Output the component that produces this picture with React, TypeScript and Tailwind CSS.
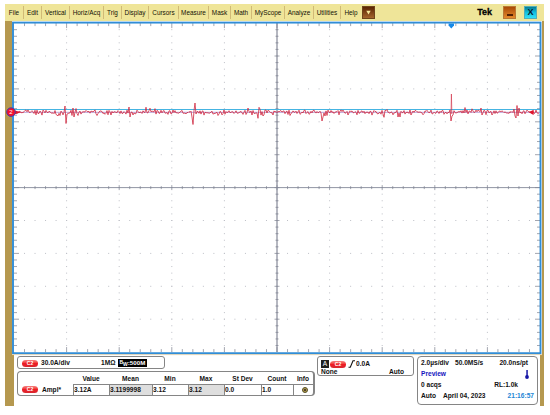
import React from 'react';

const menus = [
  { label: 'File', width: 'w-[19px]' },
  { label: 'Edit', width: 'w-[18px]' },
  { label: 'Vertical', width: 'w-[28px]' },
  { label: 'Horiz/Acq', width: 'w-[34px]' },
  { label: 'Trig', width: 'w-[18px]' },
  { label: 'Display', width: 'w-[27px]' },
  { label: 'Cursors', width: 'w-[30px]' },
  { label: 'Measure', width: 'w-[30px]' },
  { label: 'Mask', width: 'w-[22px]' },
  { label: 'Math', width: 'w-[21px]' },
  { label: 'MyScope', width: 'w-[33px]' },
  { label: 'Analyze', width: 'w-[29px]' },
  { label: 'Utilities', width: 'w-[27px]' },
];

const measurements = [
  { name: 'Value', value: '3.12A', width: 'w-[36px]', shade: 'bg-white' },
  { name: 'Mean', value: '3.1199998', width: 'w-[43px]', shade: 'bg-[#dedede]' },
  { name: 'Min', value: '3.12', width: 'w-[36px]', shade: 'bg-white' },
  { name: 'Max', value: '3.12', width: 'w-[36px]', shade: 'bg-[#dedede]' },
  { name: 'St Dev', value: '0.0', width: 'w-[37px]', shade: 'bg-white' },
  { name: 'Count', value: '1.0', width: 'w-[32px]', shade: 'bg-white' },
];

// graticule: 10 x 10 divisions, 5 minor ticks each
const LEFT = 14;
const TOP = 23.1;
const DX = 52.6;
const DY = 32.9;
const RIGHT = LEFT + DX * 10;
const BOTTOM = TOP + DY * 10;
const MID_X = LEFT + DX * 5;
const MID_Y = TOP + DY * 5;
const BASE = 112.3;

const steps = Array.from({ length: 49 }, (_, i) => i + 1);
const divs = [1, 2, 3, 4, 5, 6, 7, 8, 9];

const spikes: Array<[number, number]> = [
  [56, 114.5], [58, 116], [60, 115.5], [65, 106], [66, 123.5], [67, 114],
  [72, 115.5], [73, 108], [74, 117], [76, 108.5], [78, 115.5], [97, 115.5],
  [129, 107], [130, 117], [133, 115], [146, 107.2], [150, 108.2], [155, 108.6],
  [192, 117], [193, 124.5], [195, 103], [196, 114], [218, 115.5],
  [248, 108], [257, 113], [258, 118.3], [259, 107.3], [260, 109], [263, 116],
  [290, 115.5], [321, 113], [322, 121], [323, 117], [325, 116], [327, 115.5],
  [383, 114], [384, 117.3], [387, 109.5], [398, 117], [399, 113], [400, 117],
  [450, 110], [451, 121], [452, 116], [465, 107.5], [472, 108.8], [481, 108],
  [482, 115], [514, 109], [515, 116], [516, 118], [517, 105.5], [518, 116], [519, 108],
];

function buildTrace() {
  const peaks = new Map(spikes);
  let seed = 29;
  let path = `M${LEFT} ${BASE}`;
  for (let x = LEFT + 1; x < RIGHT; x += 1) {
    seed = (seed * 16807) % 2147483647;
    const noise = (seed / 2147483647 - 0.5) * 3.8 + (x % 3 === 0 ? 1 : -0.5);
    const y = peaks.get(x) ?? BASE + noise;
    path += `L${x} ${y.toFixed(1)}`;
  }
  return path;
}

function Graticule() {
  return (
    <g>
      <g stroke="#bdbfc6" strokeWidth="1">
        {divs.map((d) => (
          <g key={d}>
            <line x1={LEFT + d * DX} x2={LEFT + d * DX} y1={TOP + DY / 5 - 0.5} y2={BOTTOM} strokeDasharray={`1 ${DY / 5 - 1}`} />
            <line y1={TOP + d * DY} y2={TOP + d * DY} x1={LEFT + DX / 5 - 0.5} x2={RIGHT} strokeDasharray={`1 ${DX / 5 - 1}`} />
          </g>
        ))}
      </g>
      <g stroke="#8b8f9c" strokeWidth="0.8">
        {steps.map((i) => {
          const x = LEFT + (i * DX) / 5;
          const y = TOP + (i * DY) / 5;
          const len = i % 5 === 0 ? 5 : 3;
          return (
            <g key={i}>
              <line x1={x} x2={x} y1={TOP} y2={TOP + len} />
              <line x1={x} x2={x} y1={BOTTOM - len} y2={BOTTOM} />
              <line x1={x} x2={x} y1={MID_Y - len / 2} y2={MID_Y + len / 2} />
              <line y1={y} y2={y} x1={LEFT} x2={LEFT + len} />
              <line y1={y} y2={y} x1={RIGHT - len} x2={RIGHT} />
              <line y1={y} y2={y} x1={MID_X - len / 2} x2={MID_X + len / 2} />
            </g>
          );
        })}
      </g>
      <line x1={MID_X} x2={MID_X} y1={TOP} y2={BOTTOM} stroke="#858998" strokeWidth="1.2" />
      <line x1={LEFT} x2={RIGHT} y1={MID_Y} y2={MID_Y} stroke="#858998" strokeWidth="0.9" />
    </g>
  );
}

function Display() {
  return (
    <svg viewBox="12 21 530 334" className="block h-[334px] w-[530px] overflow-visible bg-white">
      <Graticule />
      <line x1={LEFT} x2={RIGHT} y1="109.5" y2="109.5" stroke="#45b4e2" strokeWidth="1" />
      <line x1={LEFT} x2={RIGHT} y1={BASE} y2={BASE} stroke="#8a62b8" strokeWidth="0.6" />
      <path d={buildTrace()} fill="none" stroke="#d02840" strokeWidth="0.8" />
      <path d="M451 114L451.4 94L451.9 114" fill="none" stroke="#d02840" strokeWidth="0.6" />
      <rect x="13" y="22.6" width="527.5" height="330.6" fill="none" stroke="#318dd6" strokeWidth="1.9" />
      <line x1="12" x2="542" y1="354.6" y2="354.6" stroke="#dccba4" strokeWidth="0.8" />
      <path d="M448.6 23.5h5.4v2l-2.7 3l-2.7-3z" fill="#1689e8" />
      <path d="M528.8 112.3l4.8-2.6v5.2z" fill="#e0142c" />
      <path d="M15 110.4l6 1.9l-6 1.9z" fill="#e0142c" />
      <circle cx="11" cy="112.1" r="4.3" fill="#f5102c" stroke="#3540b5" strokeWidth="0.9" />
      <text x="11" y="114.3" textAnchor="middle" fill="#fff" className="text-[6px] font-normal">2</text>
    </svg>
  );
}

function ChannelBadge() {
  return (
    <span className="flex h-[7px] w-[16px] shrink-0 items-center justify-center rounded-full bg-linear-to-b from-[#f58080] via-[#ee1c24] to-[#d82830] text-[5px] leading-none text-white">
      C2
    </span>
  );
}

function MenuBar() {
  return (
    <div className="flex h-[17px] items-center bg-[#efe599] text-[6.4px] font-normal text-[#141204]">
      {menus.map((menu) => (
        <div key={menu.label} className={`${menu.width} flex h-[13px] shrink-0 items-center justify-center border-r border-[#d1ba76] whitespace-nowrap`}>
          {menu.label}
        </div>
      ))}
      <div className="w-[20px] shrink-0 text-center">Help</div>
      <button className="ml-px flex size-[13px] shrink-0 items-center justify-center border border-[#70451c] bg-linear-to-b from-[#5b2503] to-[#a5662d]">
        <svg viewBox="0 0 5 5" className="size-[5px]" fill="#f5e79c">
          <path d="M0.3 0.8h4.4L2.5 4.6z" />
        </svg>
      </button>
      <div className="flex-1" />
      <span className="mr-[11px] text-[9px] font-bold text-black [-webkit-text-stroke:0.3px_black]">Tek</span>
      <button className="mr-[8px] flex size-[13px] shrink-0 items-end justify-center border border-[#b97836] bg-linear-to-b from-[#a94a05] to-[#e58a2b] pb-[2px]">
        <span className="h-[2px] w-[6px] bg-[#542204]" />
      </button>
      <button className="mr-[7px] flex size-[13px] shrink-0 items-center justify-center border border-[#53aeb8] bg-linear-to-b from-[#087b91] via-[#12bfe0] to-[#30e0f8] text-[9px] leading-none font-bold text-[#04202c]">
        X
      </button>
    </div>
  );
}

function Readouts() {
  return (
    <div className="flex h-[51px] items-start border-x-2 border-[#b5984f] bg-white pt-px pl-[3px] text-[6.6px] leading-[8px] font-bold text-[#111111]">
      <div className="flex w-[300px] shrink-0 flex-col gap-[2px]">
        <div className="flex h-[13px] w-[148px] items-center rounded-[3px] border border-[#858585] pt-px pl-[4px]">
          <ChannelBadge />
          <span className="ml-[3px] w-[60px]">30.0A/div</span>
          <span className="mr-[3px]">1MΩ</span>
          <span className="flex h-[8px] w-[29px] items-center bg-black pl-px text-white">
            <span className="-mt-[3px] text-[5px]">B</span>
            <span className="mt-[2px] text-[5px] leading-none">W</span>
            <span className="text-[6.2px]">:500M</span>
          </span>
        </div>
        <div className="flex h-[25px] w-[298px] items-end rounded-[4px] border border-r-2 border-[#858585] pl-[4px]">
          <div className="flex h-[11px] w-[51px] shrink-0 items-center gap-[4px]">
            <ChannelBadge />
            <span>Ampl*</span>
          </div>
          {measurements.map((m) => (
            <div key={m.name} className={`${m.width} shrink-0`}>
              <div className="mb-px text-center">{m.name}</div>
              <div className={`${m.shade} h-[11px] border-t border-l border-[#858585] pt-px`}>{m.value}</div>
            </div>
          ))}
          <div className="flex-1">
            <div className="mb-px text-center">Info</div>
            <div className="flex h-[11px] items-center justify-center border-t border-l border-[#858585] pl-[3px]">
              <span className="flex size-[6px] items-center justify-center rounded-full border border-[#57502e] bg-[#b3a04a]">
                <span className="size-[2px] bg-[#504030]" />
              </span>
            </div>
          </div>
        </div>
      </div>
      <div className="h-[20px] w-[97px] shrink-0 rounded-[3px] border border-[#858585] px-[3px] pt-[3px]">
        <div className="flex h-[8px] items-center">
          <span className="mr-px flex size-[8px] items-center justify-center bg-[#202020] font-normal text-white">A</span>
          <ChannelBadge />
          <svg viewBox="0 0 8 8" className="ml-[2px] size-[8px]" fill="none" stroke="#111" strokeWidth="1.1">
            <path d="M0.5 7.3H2.3L5 0.8H7" />
          </svg>
          <span>0.0A</span>
        </div>
        <div className="flex justify-between pr-[6px]">
          <span>None</span>
          <span>Auto</span>
        </div>
      </div>
      <div className="ml-[3px] flex h-[49px] w-[121px] shrink-0 flex-col gap-[3px] rounded-[4px] border border-[#858585] px-[3px] pt-[2px]">
        <div className="flex whitespace-nowrap">
          <span className="w-[34px]">2.0µs/div</span>
          <span className="flex-1">50.0MS/s</span>
          <span className="mr-[6px]">20.0ns/pt</span>
        </div>
        <div className="flex h-[8px] justify-between text-[#1414c0]">
          <span>Preview</span>
          <svg viewBox="0 0 4 9" className="mr-[5px] h-[9px] w-[4px]" fill="#1616a5">
            <rect x="1.3" y="0" width="1.5" height="7" />
            <circle cx="2" cy="7" r="1.9" />
          </svg>
        </div>
        <div className="flex justify-between">
          <span>0 acqs</span>
          <span className="mr-[16px]">RL:1.0k</span>
        </div>
        <div className="flex whitespace-nowrap">
          <span className="w-[22px]">Auto</span>
          <span className="flex-1">April 04, 2023</span>
          <span className="text-[#2386d5]">21:16:57</span>
        </div>
      </div>
    </div>
  );
}

export default function App() {
  return (
    <div className="h-[415px] w-[550px] overflow-hidden bg-white pt-[4px] pl-[5px] font-['Liberation_Sans',Arial,sans-serif]">
      <div className="w-[539px]">
        <MenuBar />
        <div className="flex">
          <div className="w-[7px] bg-[#b5984f]" />
          <div className="w-[530px]">
            <Display />
            <Readouts />
          </div>
          <div className="w-[2px] bg-[#b5984f]" />
        </div>
      </div>
    </div>
  );
}
